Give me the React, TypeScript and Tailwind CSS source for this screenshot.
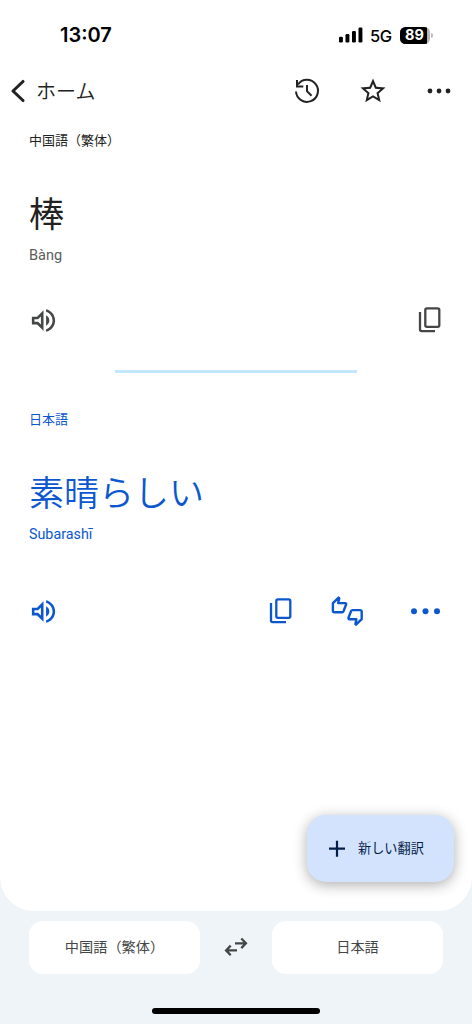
import type { ReactNode } from "react";
import clsx from "clsx";

const VOLUME =
  "M3 9v6h4l5 5V4L7 9H3zm7-.17v6.34L7.83 13H5v-2h2.83L10 8.83zM16.5 12c0-1.77-1.02-3.29-2.5-4.03v8.05c1.48-.73 2.5-2.25 2.5-4.02zM14 3.23v2.06c2.89.86 5 3.54 5 6.71s-2.11 5.85-5 6.71v2.06c4.01-.91 7-4.49 7-8.77s-2.99-7.86-7-8.77z";
const STAR =
  "M22 9.24l-7.19-.62L12 2 9.19 8.63 2 9.24l5.46 4.73L5.82 21 12 17.27 18.18 21l-1.63-7.03L22 9.24zM12 15.4l-3.76 2.27 1-4.28-3.32-2.88 4.38-.38L12 6.1l1.71 4.04 4.38.38-3.32 2.88 1 4.28L12 15.4z";

function VolumeIcon() {
  return (
    <svg viewBox="0 0 24 24" className="-ml-px size-[31px]" fill="currentColor">
      <path d={VOLUME} />
    </svg>
  );
}

function CopyIcon() {
  return (
    <svg viewBox="0 0 24 28" className="h-7 w-6" fill="none" stroke="currentColor" strokeWidth="2.3">
      <rect x="7.3" y="2.3" width="14" height="18.5" rx="1.6" />
      <path d="M2 6v17.6a1.6 1.6 0 0 0 1.6 1.6h13.4" />
    </svg>
  );
}

function HistoryIcon() {
  return (
    <svg viewBox="0 0 28 28" className="size-7" fill="none" stroke="currentColor" strokeWidth="2">
      <path d="M3 14.5a11 11 0 1 0 2-7" />
      <path d="M4 3v6.5h6.3M14 8v6.2l4.5 4.5" />
    </svg>
  );
}

function ThumbsIcon() {
  return (
    <svg viewBox="0 0 34 32" className="h-8 w-[34px]" fill="none" stroke="currentColor" strokeWidth="2.4" strokeLinejoin="round">
      <path d="M2.9 8.2 8.6 2.6l.6.6-1 4.9h6.9a1 1 0 0 1 1 1.4l-2.6 6.8a1.5 1.5 0 0 1-1.4.9H4.4a1.5 1.5 0 0 1-1.5-1.5z" />
      <path d="M31.7 24.1 26 29.7l-.6-.6 1-4.9h-6.9a1 1 0 0 1-1-1.4l2.6-6.8a1.5 1.5 0 0 1 1.4-.9h7.7a1.5 1.5 0 0 1 1.5 1.5z" />
    </svg>
  );
}

function StatusBar() {
  return (
    <div className="flex h-[70px] items-center pr-[39px] pl-[60px] text-black">
      <span className="font-[Inter] text-[20px] font-semibold">13:07</span>
      <svg viewBox="0 0 24 16" className="mr-[7px] ml-auto h-4 w-6" fill="currentColor">
        <rect x="0" y="9.8" width="3.9" height="5.6" rx="1.2" />
        <rect x="6.5" y="7" width="3.9" height="8.4" rx="1.2" />
        <rect x="13" y="4" width="3.9" height="11.4" rx="1.2" />
        <rect x="19.5" y="0.6" width="3.9" height="14.8" rx="1.2" />
      </svg>
      <span className="mr-2 w-[22px] pt-0.5 font-[Inter] text-[16.5px] font-medium tracking-[-0.4px]">5G</span>
      <div className="flex items-center">
        <div className="flex h-[17px] w-[30px] overflow-hidden rounded-[5.5px] bg-[#b5b5b5]">
          <div className="flex h-full w-[27px] items-center justify-center bg-black pl-0.5 font-[Inter] text-[14.5px] font-bold text-white">89</div>
        </div>
        <div className="ml-px h-[5px] w-[2px] rounded-r-full bg-[#bdbdbd]" />
      </div>
    </div>
  );
}

function TopBar() {
  return (
    <div className="flex h-[42px] items-center pr-[20.5px] pl-[9.5px] text-[#222]">
      <svg viewBox="0 0 16 24" className="h-6 w-4" fill="none" stroke="currentColor" strokeWidth="3.1" strokeLinecap="round" strokeLinejoin="round">
        <path d="M13 2.5 3 12l10 9.5" />
      </svg>
      <span className="ml-[10.5px] pb-px text-[20px] font-[350]">ホーム</span>
      <div className="ml-auto flex items-center">
        <HistoryIcon />
        <svg viewBox="0 0 24 24" className="ml-[37px] size-[30px]" fill="currentColor">
          <path d={STAR} />
        </svg>
        <svg viewBox="0 0 26 6" className="ml-[38px] h-1.5 w-[26px]" fill="currentColor">
          <circle cx="4" cy="3" r="2.4" />
          <circle cx="13" cy="3" r="2.4" />
          <circle cx="22" cy="3" r="2.4" />
        </svg>
      </div>
    </div>
  );
}

type PhraseProps = {
  lang: string;
  text: string;
  reading: string;
  className?: string;
  textClass?: string;
  readingClass?: string;
  actionsClass?: string;
  children: ReactNode;
};

function Phrase({ lang, text, reading, className, textClass, readingClass, actionsClass, children }: PhraseProps) {
  return (
    <section className={clsx("pr-[30px] pl-[29px]", className)}>
      <div className="flex h-10 items-center text-[13px]">{lang}</div>
      <div className={clsx("mt-[17px] flex h-[72px] items-center pb-0.5 text-[35px]", textClass)}>{text}</div>
      <div className={clsx("flex h-3.5 items-center", readingClass)}>{reading}</div>
      <div className={clsx("flex h-10 items-center", actionsClass)}>
        <VolumeIcon />
        {children}
      </div>
    </section>
  );
}

export default function App() {
  return (
    <div className="flex h-[1024px] w-[472px] flex-col bg-[#eff4f9] font-['Noto_Sans_CJK_JP',sans-serif]">
      <main className="relative h-[911px] rounded-b-[34px] bg-white">
        <StatusBar />
        <TopBar />
        <Phrase
          lang="中国語（繁体）"
          text="棒"
          reading="Bàng"
          className="mt-2 text-[#222]"
          readingClass="font-[Roboto] text-[14.5px] text-[#5a5d5c]"
          actionsClass="mt-[37px] text-[#444746]"
        >
          <div className="ml-auto">
            <CopyIcon />
          </div>
        </Phrase>
        <div className="mx-auto mt-[30px] h-[3px] w-[242px] bg-[#c2e7ff]" />
        <Phrase
          lang="日本語"
          text="素晴らしい"
          reading="Subarashī"
          className="mt-[26px] text-[#0b57d0]"
          textClass="font-[350]"
          readingClass="font-[Roboto] text-[14.3px]"
          actionsClass="mt-[49px]"
        >
          <div className="ml-auto">
            <CopyIcon />
          </div>
          <div className="ml-[37px]">
            <ThumbsIcon />
          </div>
          <svg viewBox="0 0 32 8" className="ml-[46px] h-2 w-8" fill="currentColor">
            <circle cx="4" cy="4.3" r="3" />
            <circle cx="15.5" cy="4.3" r="3" />
            <circle cx="27" cy="4.3" r="3" />
          </svg>
        </Phrase>
        <button className="absolute right-[18.5px] bottom-[29px] flex h-[67px] w-[147px] items-center rounded-[19px] bg-[#d3e3fd] pl-[21.5px] text-[#041e49] shadow-[0_3px_14px_rgba(0,0,0,0.32)]">
          <svg viewBox="0 0 18 18" className="size-[18px]" stroke="currentColor" strokeWidth="2.2">
            <path d="M9 .7v16M1 8.7h16" />
          </svg>
          <span className="ml-3 pb-0.5 text-[13.2px] whitespace-nowrap">新しい翻訳</span>
        </button>
      </main>
      <footer className="flex flex-col items-center pt-[9.5px]">
        <div className="flex w-full items-center justify-between px-[29px] text-[14.2px] text-[#444746]">
          <div className="flex h-[53px] w-[171px] items-center justify-center rounded-[14px] bg-white pb-px">中国語（繁体）</div>
          <svg viewBox="0 0 24 20" className="h-5 w-6" fill="none" stroke="currentColor" strokeWidth="2.3">
            <path d="M11 6.3h10.5M17.3 1.5l4.6 4.8-4.6 4.8M13 13.4H2.5M6.7 8.6l-4.6 4.8 4.6 4.8" />
          </svg>
          <div className="flex h-[53px] w-[171px] items-center justify-center rounded-[14px] bg-white pb-px">日本語</div>
        </div>
        <div className="mt-[34.5px] h-[6px] w-[168px] rounded-full bg-black" />
      </footer>
    </div>
  );
}
